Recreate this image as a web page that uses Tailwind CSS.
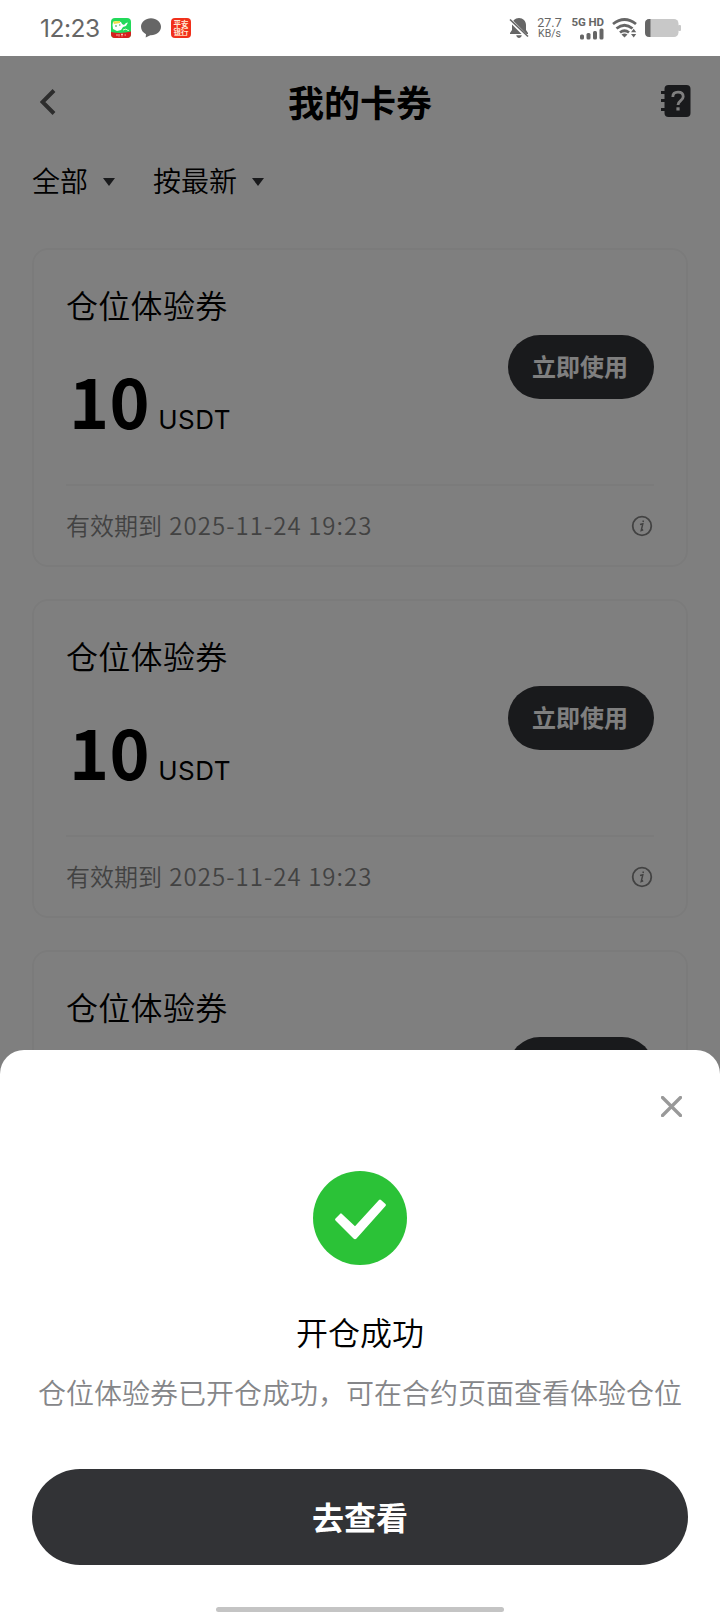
<!DOCTYPE html>
<html lang="zh-CN">
<head>
<meta charset="utf-8">
<title>我的卡券</title>
<script src="https://cdn.jsdelivr.net/npm/@tailwindcss/browser@4"></script>
</head>
<body class="bg-white">
<div class="relative flex h-[1612px] w-[720px] flex-col overflow-hidden bg-white font-['Noto_Sans_CJK_SC',sans-serif] font-[350] text-black">

  <!-- Status bar -->
  <header class="flex h-14 shrink-0 items-center pr-10 pl-10 font-[Roboto,sans-serif] font-normal text-[#666]">
    <span class="mt-px w-[71px] font-['Inter',sans-serif] text-[24.5px] leading-none tracking-[-0.5px] whitespace-nowrap">12:23</span>
    <svg class="size-5" viewBox="0 0 20 20">
      <defs><clipPath id="app"><rect width="20" height="20" rx="4"/></clipPath></defs>
      <g clip-path="url(#app)"><rect width="20" height="20" fill="#22d95a"/><path d="M0 14Q10 16 20 13.5V20H0Z" fill="#d81e1e"/></g>
      <path d="M2 4L5 3l5 1 1 2 2 1 2-2 2-.5-2 3.500-3 1-2 3-4 1-4-2-.5-4Z" fill="#fff"/><path d="M2 3.500 9 3v2L3 6Z" fill="#f0df4a"/><path d="M4 8h2M8 7h1.500" stroke="#35a055"/><path d="m12 12 3-1 1 1 2 .5" stroke="#d9ffd0" fill="none"/>
      <path d="M5 17h2M8 16v2.500M10 16.500h2M11 15.500v3M13.500 17h1.500" stroke="#ffd9c9" stroke-width=".8"/>
    </svg>
    <svg class="ml-[10px] h-5 w-5" viewBox="0 0 20 20"><path fill="#666" d="M10 .3C4.500.3 0 4 0 8.800c0 3.200 2 6 5 7.400L4.700 19.500l4.600-2.300c6 .3 10.700-3.400 10.700-8.400C20 4 15.500.3 10 .3Z"/></svg>
    <div class="ml-[10px] flex h-5 w-5 flex-col items-center justify-center rounded bg-[#f1301b] text-[#ffe9d5]"><p class="w-4 text-center font-['Noto_Sans_CJK_SC',sans-serif] text-[7.5px] leading-[7.500px] font-bold break-all">平安银行</p><i class="h-px w-2.5 bg-[#ffb99b]"></i></div>

    <svg class="ml-auto size-5" viewBox="0 0 20 20"><path fill="#666" d="M10 0C6 0 3 3 3 7v5L1 15v1h18v-1l-2-3V7c0-4-3-7-7-7ZM7.200 17.200h5.600C12.300 19 11.300 20 10 20s-2.300-1-2.800-2.800Z"/><path d="M0 1 18.500 19.500" stroke="#fff" stroke-width="3.500"/><path d="M1 1.500 19 18.500" stroke="#666" stroke-width="1.700"/></svg>
    <div class="ml-[8px] flex w-[25px] flex-col items-center leading-none"><span class="text-[12.5px] leading-[11px]">27.7</span><span class="text-[10.500px] leading-[11px] whitespace-nowrap">KB/s</span></div>
    <div class="ml-[8px] flex w-[34px] flex-col items-end">
      <span class="text-[11.500px] leading-[11px] font-bold tracking-[-0.1px] whitespace-nowrap">5G HD</span>
      <svg class="h-3 w-6" viewBox="0 0 24 12" fill="#666"><rect x="0" y="6.500" width="4" height="5" rx="1.500"/><rect x="6.500" y="5" width="4" height="6.500" rx="1.500"/><rect x="13" y="3" width="4" height="8.500" rx="1.500"/><rect x="19.500" y="0.500" width="4" height="11" rx="1.500"/></svg>
    </div>
    <svg class="ml-[8px] h-5 w-[25px]" viewBox="0 0 25 20" fill="none" stroke="#666" stroke-width="2.800"><path d="M1 6Q12.500-3 24 6M4.500 10.500Q12.500 4 20.500 10.500M8 14.500q4.500-3.500 9 0"/><path d="m12.500 19.500-3-3q3-2 6 0Z" fill="#666" stroke="none"/><path d="m19 14.200 2.700-3.400 2.500 3.400ZM19 16h5.200l-2.500 3.500Z" fill="#666" stroke="none"/></svg>
    <svg class="ml-[8px] -mr-px h-[18px] w-9" viewBox="0 0 36 18"><rect width="33.500" height="18" rx="4.500" fill="#c8c8c8"/><rect x="33" y="6" width="3" height="6" rx="1" fill="#c8c8c8"/><path d="M5.500 0H4.500Q0 0 0 4.500v9Q0 18 4.500 18h1Z" fill="#666"/></svg>
  </header>

  <!-- Voucher list page -->
  <main class="flex flex-col">
    <nav class="flex h-[90px] items-center pr-[28px] pl-10">
      <svg class="mt-px h-[26px] w-8" viewBox="0 0 32 26"><path d="M14 1.500 2.500 13 14 24.500" fill="none" stroke="#5a5a5a" stroke-width="4"/></svg>
      <h1 class="flex-1 pr-3 text-center text-[36px] leading-none font-bold">我的卡券</h1>
      <svg class="h-8 w-8" viewBox="0 0 32 32"><rect x="4.500" y="0" width="26" height="32" rx="4" fill="#333438"/><path d="M1 7.500h6M1 15.500h6M1 24.500h6" stroke="#333438" stroke-width="3"/><path d="M12.800 12c0-3.200 2-4.800 5.200-4.800s5.200 1.700 5.200 4.500c0 4-5.200 3.800-5.200 8.300" fill="none" stroke="#fff" stroke-width="2.800"/><rect x="16.400" y="22.300" width="3.200" height="3.200" fill="#fff"/></svg>
    </nav>

    <div class="flex h-[102px] items-start pt-[18px] pl-8 text-[28px] leading-[32px]">
      <span>全部</span>
      <svg class="mt-3.5 ml-[15px] h-2 w-3" viewBox="0 0 12 8"><path d="M0 0h12L6 8Z" fill="#333438"/></svg>
      <span class="ml-[38px]">按最新</span>
      <svg class="mt-3.5 ml-[15px] h-2 w-3" viewBox="0 0 12 8"><path d="M0 0h12L6 8Z" fill="#333438"/></svg>
    </div>

    <section class="flex flex-col gap-8 px-8">
      <article class="flex h-[319px] shrink-0 flex-col rounded-2xl border-2 border-[#f7f7f7] px-8">
        <div class="flex h-[236px] items-center justify-between border-b-2 border-[#f7f7f7]">
          <div class="flex h-full flex-col pt-[36px]">
            <h2 class="text-[32px] leading-[36px] tracking-[0.3px]">仓位体验券</h2>
            <p class="mt-[38px] flex items-baseline pl-[3px] leading-[80px]"><b class="text-[68px] tracking-[0.5px]">10</b><span class="ml-[8px] font-['Inter',sans-serif] text-[26px] font-normal tracking-[0.5px]">USDT</span></p>
          </div>
          <button class="h-16 w-[146px] rounded-full bg-[#333438] pr-[2px] pb-[3px] text-[24px] font-bold whitespace-nowrap text-white">立即使用</button>
        </div>
        <div class="flex flex-1 items-center justify-between text-[24px] text-[#858585]">
          <span class="pb-0.5">有效期到 <span class="ml-[2px] tracking-[1.05px]">2025-11-24 19:23</span></span>
          <svg class="mr-px size-[22px]" viewBox="0 0 22 22" fill="none" stroke="#858585"><circle cx="11" cy="11" r="9.300" stroke-width="1.800"/><path d="m9 9.500 2.800-.7-1.600 6.700 2-.7M12.200 5.500v1.400" stroke-width="1.500"/></svg>
        </div>
      </article>
      <article class="flex h-[319px] shrink-0 flex-col rounded-2xl border-2 border-[#f7f7f7] px-8">
        <div class="flex h-[236px] items-center justify-between border-b-2 border-[#f7f7f7]">
          <div class="flex h-full flex-col pt-[36px]">
            <h2 class="text-[32px] leading-[36px] tracking-[0.3px]">仓位体验券</h2>
            <p class="mt-[38px] flex items-baseline pl-[3px] leading-[80px]"><b class="text-[68px] tracking-[0.5px]">10</b><span class="ml-[8px] font-['Inter',sans-serif] text-[26px] font-normal tracking-[0.5px]">USDT</span></p>
          </div>
          <button class="h-16 w-[146px] rounded-full bg-[#333438] pr-[2px] pb-[3px] text-[24px] font-bold whitespace-nowrap text-white">立即使用</button>
        </div>
        <div class="flex flex-1 items-center justify-between text-[24px] text-[#858585]">
          <span class="pb-0.5">有效期到 <span class="ml-[2px] tracking-[1.05px]">2025-11-24 19:23</span></span>
          <svg class="mr-px size-[22px]" viewBox="0 0 22 22" fill="none" stroke="#858585"><circle cx="11" cy="11" r="9.300" stroke-width="1.800"/><path d="m9 9.500 2.800-.7-1.600 6.700 2-.7M12.200 5.500v1.400" stroke-width="1.500"/></svg>
        </div>
      </article>
      <article class="flex h-[319px] shrink-0 flex-col rounded-2xl border-2 border-[#f7f7f7] px-8">
        <div class="flex h-[234px] items-center justify-between">
          <h2 class="self-start pt-[36px] text-[32px] leading-[36px] tracking-[0.3px]">仓位体验券</h2>
          <div class="h-16 w-[146px] rounded-full bg-[#333438]"></div>
        </div>
      </article>
    </section>
  </main>

  <!-- Backdrop and bottom sheet -->
  <div class="absolute inset-x-0 top-14 bottom-0 flex flex-col justify-end bg-black/50">
    <section class="flex h-[562px] flex-col items-center rounded-t-3xl bg-white px-8">
      <svg class="mt-[46px] mr-[6px] size-[21px] shrink-0 self-end" viewBox="0 0 21 21"><path d="m1.500 1.500 18 18m0-18-18 18" stroke="#999" stroke-width="3.300" stroke-linecap="round"/></svg>
      <svg class="mt-[54px] size-[94px] shrink-0" viewBox="0 0 94 94"><circle cx="47" cy="47" r="47" fill="#2bc237"/><path d="m22.500 47.500 5-5Q28 42 28.700 42.700L42 55.300 66 29Q67 28 68 29l4.500 4q1 1 0 2L43.500 67.500q-1.500 1.300-3 0L22.500 49.500q-1-1 0-2Z" fill="#fff"/></svg>
      <h2 class="mt-[46px] text-[32px] leading-[40px]">开仓成功</h2>
      <p class="mt-[21px] text-[28px] leading-[40px] whitespace-nowrap text-[#858689]">仓位体验券已开仓成功，可在合约页面查看体验仓位</p>
      <button class="mt-[57px] h-24 w-full shrink-0 rounded-full bg-[#323336] pb-0.5 text-[32px] font-bold text-white">去查看</button>
      <div class="mt-[42px] h-[5px] w-72 shrink-0 rounded-full bg-[#c4c4c4]"></div>
    </section>
  </div>
</div>
</body>
</html>
